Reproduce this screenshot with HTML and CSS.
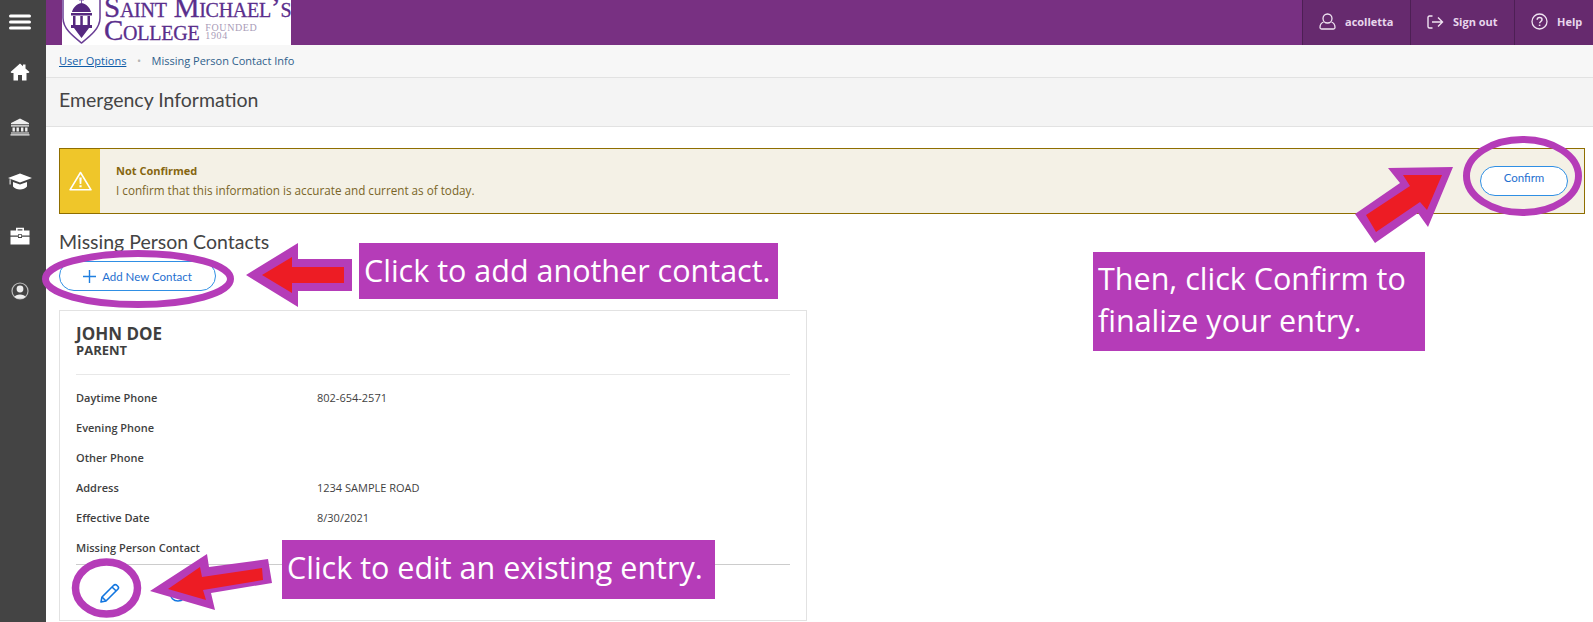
FILE: index.html
```html
<!DOCTYPE html>
<html lang="en">
<head>
    <meta charset="UTF-8">
    <meta name="viewport" content="width=device-width, initial-scale=1.0">
    <title>Emergency Information</title>
    <link rel="stylesheet" href="styles.css">
</head>
<body>
    <nav class="sidebar">
        <svg class="nav-menu" width="22" height="16" viewBox="0 0 22 16"><path d="M1.500 2h19M1.500 8h19M1.500 14h19" stroke="#fff" stroke-width="3" stroke-linecap="round"/></svg>
        <svg class="nav-icon" width="20" height="18" viewBox="0 0 20 18"><path d="M10 0.500 L0.500 9 L1.500 10 H3.500 V17.500 H8 V12 H12 V17.500 H16.500 V10 H18.500 L19.500 9 L15.500 5.400 V1.500 H13 V3.200Z" fill="#fff"/></svg>
        <svg class="nav-icon" width="20" height="18" viewBox="0 0 20 18"><path d="M10 0.500 L19 5 V6.200 H1 V5Z M1 7.200H19V8.400H1Z M2.500 9.400h2.400v4.200H2.500Z M6.500 9.400h2.400v4.200H6.500Z M11 9.400h2.400v4.200H11Z M15.100 9.400h2.400v4.200h-2.400Z M1 14.400H19V15.600H1Z M0.500 16.200H19.500V17.400H0.500Z" fill="#eee"/></svg>
        <svg class="nav-icon" width="24" height="17" viewBox="0 0 24 17"><path d="M12 0.500 L24 5 L12 9.500 L0 5Z M5 9 L12 11.600 L19 9 V13.500 C16 17.500 8 17.500 5 13.500Z M1.600 6.200 H2.600 V11.500 H1.600Z" fill="#fff"/></svg>
        <svg class="nav-icon" width="20" height="18" viewBox="0 0 20 18"><path d="M6 3.500V0.800H14V3.500H12.400V2.300H7.600V3.500Z M0.500 3.500H19.500V8.600H12V7.200H8V8.600H0.500Z M8.800 8H11.200V10H8.800Z M0.500 9.800H8V11H12V9.800H19.500V17.500H0.500Z" fill="#fff"/></svg>
        <svg class="nav-icon" width="18" height="18" viewBox="0 0 18 18"><circle cx="9" cy="9" r="8" fill="none" stroke="#bbb" stroke-width="1.200"/><circle cx="9" cy="7" r="3.400" fill="#eee"/><path d="M3.500 15 C4 11.500 14 11.500 14.500 15 C12 17.400 6 17.400 3.500 15Z" fill="#eee"/></svg>
    </nav>

    <div class="page">
        <header class="topbar">
            <div class="logo">
                <svg class="logo-shield" width="39" height="50" viewBox="0 0 39 50">
                    <path d="M1 1 V24 C1 35 12 43 19.500 49 C27 43 38 35 38 24 V1" fill="none" stroke="#6b3f96" stroke-width="1.500"/>
                    <path d="M19.500 3 V9 M17 6 H22" stroke="#7d5aa6" stroke-width="1"/>
                    <path d="M19.500 9 C14 10 11 14 10 18 H29 C28 14 25 10 19.500 9Z M9 19 H30 V21.500 H9Z M11 22 H13.500 V31 H11Z M18.300 22 H20.800 V31 H18.300Z M25.500 22 H28 V31 H25.500Z M9 31 H30 V34 H27 L19.500 44 L12 34 H9Z" fill="#55287f"/>
                </svg>
                <div class="logo-text">
                    <div class="logo-line">Saint Michael’s</div>
                    <div class="logo-row">
                        <div class="logo-line">College</div>
                        <div class="logo-founded">FOUNDED<br>1904</div>
                    </div>
                </div>
            </div>
            <div class="topbar-actions">
                <a class="top-link top-link-user">
                    <svg width="17" height="17" viewBox="0 0 17 17" fill="none" stroke="#efe3f1" stroke-width="1.300"><circle cx="8.500" cy="5.500" r="4.500"/><path d="M4.500 9 C2 10 1 12 1 14.500 C1 15.500 1.500 16 2.500 16 H14.500 C15.500 16 16 15.500 16 14.500 C16 12 15 10 12.500 9"/></svg>
                    <span>acolletta</span>
                </a>
                <a class="top-link top-link-out">
                    <svg width="17" height="14" viewBox="0 0 17 14" fill="none" stroke="#efe3f1" stroke-width="1.400"><path d="M5.500 1 H2.500 C1.500 1 1 1.500 1 2.500 V11.500 C1 12.500 1.500 13 2.500 13 H5.500"/><path d="M5 7 H15.500 M11 2.500 L15.500 7 L11 11.500"/></svg>
                    <span>Sign out</span>
                </a>
                <a class="top-link top-link-help">
                    <svg width="17" height="17" viewBox="0 0 17 17" fill="none" stroke="#efe3f1" stroke-width="1.300"><circle cx="8.500" cy="8.500" r="7.500"/><path d="M6.200 6.800 C6.200 3.800 11 3.900 11 6.700 C11 8.500 8.600 8.500 8.600 10.300" stroke-width="1.500"/><path d="M8.600 11.600 V13" stroke-width="1.600"/></svg>
                    <span>Help</span>
                </a>
            </div>
        </header>

        <div class="breadcrumb">
            <a class="crumb-link">User Options</a>
            <span class="crumb-dot">•</span>
            <span class="crumb-current">Missing Person Contact Info</span>
        </div>

        <div class="title-bar"><h1>Emergency Information</h1></div>

        <main class="content">
            <div class="alert">
                <div class="alert-icon">
                    <svg width="23" height="20" viewBox="0 0 23 20"><path d="M11.500 1.500 L22 18.800 H1Z" fill="none" stroke="#fff" stroke-width="1.600" stroke-linejoin="round"/><path d="M10.300 6.500 H12.700 L12.300 13 H10.700Z M10.400 14.200 H12.600 V16.300 H10.400Z" fill="#fff"/></svg>
                </div>
                <div class="alert-body">
                    <div class="alert-title">Not Confirmed</div>
                    <div class="alert-text">I confirm that this information is accurate and current as of today.</div>
                </div>
                <button class="btn btn-confirm">Confirm</button>
            </div>

            <h2 class="section-title">Missing Person Contacts</h2>
            <button class="btn btn-add">
                <svg width="13" height="13" viewBox="0 0 13 13"><path d="M6.500 0V13M0 6.500H13" stroke="#1f7fe0" stroke-width="1.400"/></svg>
                Add New Contact
            </button>

            <section class="card">
                <div class="card-head">
                    <div class="card-name">JOHN DOE</div>
                    <div class="card-role">PARENT</div>
                </div>
                <div class="card-rows">
                    <div class="row"><span class="row-label">Daytime Phone</span><span class="row-value">802-654-2571</span></div>
                    <div class="row"><span class="row-label">Evening Phone</span><span class="row-value"></span></div>
                    <div class="row"><span class="row-label">Other Phone</span><span class="row-value"></span></div>
                    <div class="row"><span class="row-label">Address</span><span class="row-value">1234 SAMPLE ROAD</span></div>
                    <div class="row"><span class="row-label">Effective Date</span><span class="row-value">8/30/2021</span></div>
                    <div class="row"><span class="row-label">Missing Person Contact</span><span class="row-value"></span></div>
                </div>
                <div class="card-actions">
                    <svg width="20" height="20" viewBox="0 0 20 20" fill="none" stroke="#1276e0" stroke-width="1.600" stroke-linejoin="round"><path d="M1 19 L2 14 L13.500 2.500 C14.500 1.500 15.500 1.500 16.500 2 L18 3.500 C18.800 4.500 18.600 5.500 17.800 6.300 L6 18Z"/><path d="M2 14 L6 18 M12 4 L16.200 8" /></svg>
                    <svg width="20" height="20" viewBox="0 0 20 20" fill="none" stroke="#1276e0" stroke-width="1.500"><circle cx="10" cy="10" r="8"/></svg>
                </div>
            </section>
        </main>
    </div>

    <!-- annotations drawn over the page -->
    <svg class="marks" width="1593" height="622" viewBox="0 0 1593 622">
        <ellipse cx="1522.500" cy="176" rx="56" ry="36.500" fill="none" stroke="#b53cb8" stroke-width="7"/>
        <ellipse cx="138" cy="279" rx="92.500" ry="25.500" fill="none" stroke="#b53cb8" stroke-width="7"/>
        <ellipse cx="106.500" cy="588" rx="31" ry="26" fill="none" stroke="#b53cb8" stroke-width="7.500"/>
        <polygon points="1388,168 1453,167 1428,227 1418,213 1375,243 1355,214 1400,183" fill="#b53cb8"/>
        <polygon points="1403,175 1442,175 1427,210 1420,202 1376,232 1366,215 1410,186" fill="#ed1c24"/>
        <polygon points="246,275 298,243 298,259 352,259 352,291 298,291 298,307" fill="#b53cb8"/>
        <polygon points="262,275 292,257 292,267 344,267 344,283 292,283 292,293" fill="#ed1c24"/>
        <polygon points="150,591 207,554 209,567 268,559 272,583 211,593 215,610" fill="#b53cb8"/>
        <polygon points="168,589 200,567 202,577 262,568 263,580 203,590 206,600" fill="#ed1c24"/>
    </svg>
    <div class="note note-add">Click to add another contact.</div>
    <div class="note note-confirm">Then, click Confirm to<br>finalize your entry.</div>
    <div class="note note-edit">Click to edit an existing entry.</div>
</body>
</html>
```

FILE: styles.css
```css
* {
    box-sizing: border-box;
}
html, body {
    height: 622px;
}
body {
    margin: 0;
    display: flex;
    position: relative;
    overflow: hidden;
    background-color: #fff;
    font-family: "Open Sans", sans-serif;
    color: #3f3f3f;
}

/* left nav */
.sidebar {
    width: 46px;
    flex: none;
    background-color: #444;
    display: flex;
    flex-direction: column;
    align-items: center;
    padding: 14px 7px 0 0;
}
.nav-menu {
    margin-bottom: 33px;
    flex: none;
}
.nav-icon {
    margin-bottom: 37px;
    flex: none;
}

.page {
    flex: 1;
    min-width: 0;
    display: flex;
    flex-direction: column;
}

/* top bar */
.topbar {
    height: 45px;
    flex: none;
    background-color: #783082;
    display: flex;
    justify-content: space-between;
    overflow: hidden;
}
.logo {
    width: 229px;
    margin-left: 16px;
    background-color: #fff;
    display: flex;
    gap: 3px;
    overflow: hidden;
}
.logo-shield {
    flex: none;
    margin-top: -6px;
}
.logo-text {
    margin-top: -5px;
    font-family: "Liberation Serif", serif;
    color: #5a2e8c;
    -webkit-text-stroke: 0.3px #5a2e8c;
}
.logo-line {
    font-size: 29px;
    line-height: 24px;
    font-variant: small-caps;
    white-space: nowrap;
    letter-spacing: -0.25px;
}
.logo-row {
    display: flex;
    gap: 6px;
    margin-top: -1px;
}
.logo-founded {
    font-size: 10px;
    line-height: 8px;
    letter-spacing: 0.6px;
    color: #a99cb8;
    padding-top: 6px;
    -webkit-text-stroke: 0;
}
.topbar-actions {
    display: flex;
    background-color: #662a6e;
}
.top-link {
    display: flex;
    align-items: center;
    gap: 9px;
    padding: 0 0 2px 16px;
    border-left: 1px solid #4d1f54;
    color: #e8d6ec;
    font-size: 11px;
    font-weight: 700;
}
.top-link-user {
    width: 108px;
}
.top-link-out {
    width: 104px;
}
.top-link-help {
    width: 79px;
}

/* breadcrumb and title */
.breadcrumb {
    height: 33px;
    flex: none;
    background-color: #f7f7f7;
    border-bottom: 1px solid #e2e2e2;
    display: flex;
    align-items: center;
    padding: 0 0 2px 13px;
    font-size: 11px;
}
.crumb-link {
    color: #0f5ca8;
    text-decoration: underline;
}
.crumb-dot {
    color: #b5b5b5;
    margin: 0 10.500px;
}
.crumb-current {
    color: #2f5f8c;
}
.title-bar {
    height: 49px;
    flex: none;
    background-color: #f4f4f4;
    border-bottom: 1px solid #e2e2e2;
    display: flex;
    align-items: center;
    padding: 0 0 6px 13px;
}
.title-bar h1 {
    margin: 0;
    font-family: Lato, sans-serif;
    font-size: 19.500px;
    font-weight: 400;
    color: #444;
}

/* main */
.content {
    padding: 21px 8px 0 13px;
}
.alert {
    height: 66px;
    border: 1px solid #8f6e00;
    background-color: #f4f1e6;
    display: flex;
    align-items: center;
}
.alert-icon {
    width: 40px;
    height: 100%;
    flex: none;
    background-color: #efc62a;
    display: flex;
    align-items: center;
    justify-content: center;
}
.alert-body {
    flex: 1;
    padding: 0 0 2px 16px;
}
.alert-title {
    font-size: 11px;
    font-weight: 700;
    line-height: 15px;
    color: #86660f;
}
.alert-text {
    font-size: 11.700px;
    line-height: 15px;
    margin-top: 5px;
    color: #7a6526;
}
.btn {
    height: 30px;
    border: 1px solid #2f8fe4;
    border-radius: 15px;
    background-color: #fff;
    color: #1f6fd0;
    font-family: Lato, sans-serif;
    font-size: 11.500px;
}
.btn-confirm {
    width: 88px;
    margin-right: 16px;
    padding-bottom: 8px;
}
.section-title {
    margin: 17px 0 0;
    font-family: Lato, sans-serif;
    font-size: 19.500px;
    line-height: 22px;
    font-weight: 400;
    color: #444;
}
.btn-add {
    display: flex;
    align-items: center;
    justify-content: center;
    gap: 6px;
    width: 157px;
    margin-top: 8px;
}

/* contact card */
.card {
    width: 748px;
    height: 311px;
    margin-top: 19px;
    border: 1px solid #e2e2e2;
    padding: 0 16px;
}
.card-head {
    height: 64px;
    padding-top: 13px;
    border-bottom: 1px solid #e8e8e8;
}
.card-name {
    font-size: 17px;
    line-height: 20px;
    font-weight: 700;
}
.card-role {
    font-size: 13px;
    line-height: 12px;
    font-weight: 700;
}
.card-rows {
    padding-top: 7px;
}
.row {
    display: flex;
    height: 30px;
    align-items: center;
    font-size: 11px;
}
.row-label {
    width: 241px;
    font-weight: 600;
}
.card-actions {
    display: flex;
    gap: 48px;
    margin-top: 2px;
    padding: 18px 0 0 24px;
    border-top: 1px solid #ccc;
}

/* annotation layer */
.marks {
    position: absolute;
    top: 0;
    left: 0;
}
.note {
    position: absolute;
    background-color: #b53cb8;
    color: #fff;
    font-family: "Open Sans", sans-serif;
    font-size: 30.500px;
    white-space: nowrap;
}
.note-add {
    left: 359px;
    top: 243px;
    width: 419px;
    height: 56px;
    line-height: 54px;
    padding-left: 5px;
}
.note-confirm {
    left: 1093px;
    top: 252px;
    width: 332px;
    height: 99px;
    line-height: 42px;
    padding: 5px 0 0 5px;
}
.note-edit {
    left: 282px;
    top: 540px;
    width: 433px;
    height: 59px;
    line-height: 55px;
    padding-left: 5px;
}
```
